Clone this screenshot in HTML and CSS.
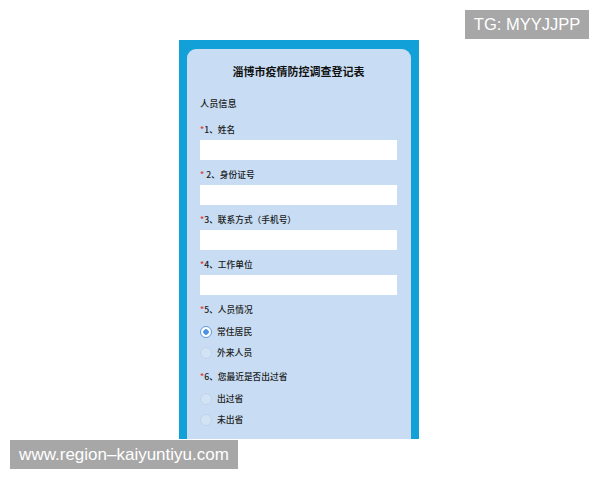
FILE: index.html
```html
<!DOCTYPE html>
<html lang="zh-CN">
<head>
<meta charset="utf-8">
<title>淄博市疫情防控调查登记表</title>
<link rel="stylesheet" href="styles.css">
</head>
<body>
<div class="frame">
  <div class="card">
    <h1 class="title">淄博市疫情防控调查登记表</h1>
    <h2 class="section">人员信息</h2>
    <div class="field">
      <div class="label"><span class="req">*</span>1、姓名</div>
      <div class="input"></div>
    </div>
    <div class="field">
      <div class="label"><span class="req">*</span> 2、身份证号</div>
      <div class="input"></div>
    </div>
    <div class="field">
      <div class="label"><span class="req">*</span>3、联系方式（手机号）</div>
      <div class="input"></div>
    </div>
    <div class="field">
      <div class="label"><span class="req">*</span>4、工作单位</div>
      <div class="input"></div>
    </div>
    <div class="field">
      <div class="label"><span class="req">*</span>5、人员情况</div>
      <div class="radios">
        <div class="radio"><span class="dot checked"></span>常住居民</div>
        <div class="radio"><span class="dot"></span>外来人员</div>
      </div>
    </div>
    <div class="field">
      <div class="label"><span class="req">*</span>6、您最近是否出过省</div>
      <div class="radios">
        <div class="radio"><span class="dot"></span>出过省</div>
        <div class="radio"><span class="dot"></span>未出省</div>
      </div>
    </div>
  </div>
</div>
<div class="mark mark-top">TG: MYYJJPP</div>
<div class="mark mark-bottom">www.region–kaiyuntiyu.com</div>
</body>
</html>
```
FILE: styles.css
```css
html, body {
  margin: 0;
  padding: 0;
  background: #ffffff;
}
body {
  width: 600px;
  height: 480px;
  overflow: hidden;
  font-family: "Noto Sans CJK SC", "Noto Sans", sans-serif;
}
.frame {
  box-sizing: border-box;
  width: 240px;
  height: 399px;
  margin: 40px 0 0 179px;
  padding: 9px 8px 0 8px;
  background: #12a0d8;
  overflow: hidden;
}
.card {
  box-sizing: border-box;
  height: 100%;
  background: #c8ddf3;
  border-radius: 9px 9px 0 0;
  padding: 14px 14px 0 13px;
  color: #1a1a1a;
}
.title {
  margin: 0;
  font-size: 11px;
  line-height: 16px;
  font-weight: 700;
  text-align: center;
  color: #111;
}
.section {
  margin: 17px 0 14px 0;
  font-size: 9.2px;
  line-height: 14px;
  font-weight: 500;
  color: #1a1a1a;
}
.field {
  margin-bottom: 9px;
}
.label {
  font-size: 8.7px;
  line-height: 12px;
  font-weight: 500;
  color: #1a1a1a;
  white-space: nowrap;
}
.req {
  color: #e23b3b;
}
.input {
  margin-top: 4px;
  height: 20px;
  background: #ffffff;
}
.radios {
  margin-top: 5px;
  margin-bottom: -1px;
}
.radio {
  display: flex;
  align-items: center;
  height: 21px;
  font-size: 8.8px;
  font-weight: 500;
  color: #222;
}
.dot {
  box-sizing: border-box;
  width: 12px;
  height: 12px;
  margin: 0 5px 0 0;
  border-radius: 50%;
  border: 1px solid #c0d4ea;
  background: #d2e3f5;
}
.dot.checked {
  border: 1.3px solid #5a9be5;
  background: radial-gradient(circle, #4f92e2 0 2.5px, #ffffff 3px);
}
.mark {
  position: absolute;
  box-sizing: border-box;
  height: 29px;
  background: #a7a7a7;
  color: #ffffff;
  font-family: "Liberation Sans", Arial, sans-serif;
  font-size: 17px;
  line-height: 29px;
  text-align: center;
  white-space: nowrap;
}
.mark-top {
  left: 465px;
  top: 10px;
  width: 124px;
  font-size: 16.5px;
}
.mark-bottom {
  left: 10px;
  top: 440px;
  width: 228px;
}
```
